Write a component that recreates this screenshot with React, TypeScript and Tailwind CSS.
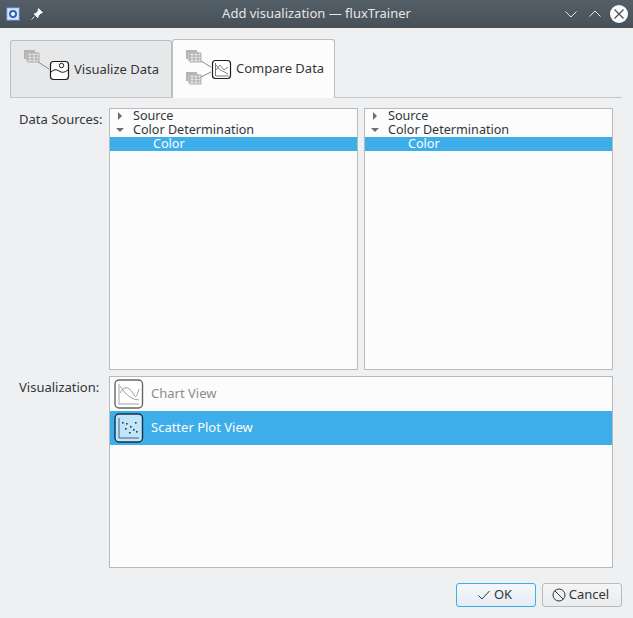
const font = "font-['Noto_Sans',sans-serif]";

function Cube({ x, y }: { x: number; y: number }) {
  return (
    <g transform={`translate(${x} ${y})`}>
      <rect x="0" y="0" width="11" height="9" fill="#b4b4b4" />
      <rect x="2" y="2" width="11" height="9" fill="#c4c4c4" />
      <rect x="4" y="3" width="11" height="9" fill="#e8e8e8" stroke="#a0a0a0" strokeWidth="0.8" />
      <path d="M4 6h11M4 9h11M8 3v9M12 3v9" stroke="#a0a0a0" strokeWidth="0.8" fill="none" />
    </g>
  );
}

function VisualizeIcon() {
  return (
    <svg width="50" height="38" viewBox="0 0 50 38" className="shrink-0">
      <Cube x={0} y={0} />
      <path d="M14 12 L25 19" stroke="#8a8a8a" strokeWidth="1" fill="none" />
      <rect x="26.5" y="11.5" width="18" height="18" rx="3" fill="#fff" stroke="#1c1c1c" strokeWidth="1.2" />
      <circle cx="37.5" cy="15.5" r="2.2" fill="none" stroke="#1c1c1c" strokeWidth="1" />
      <path d="M27 22 Q31 18 35 21 T44 20" fill="none" stroke="#1c1c1c" strokeWidth="1" />
    </svg>
  );
}

function CompareIcon() {
  return (
    <svg width="50" height="38" viewBox="0 0 50 38" className="shrink-0">
      <Cube x={0} y={0} />
      <Cube x={0} y={22} />
      <path d="M15 11 L25 17 M15 27 L25 22" stroke="#8a8a8a" strokeWidth="1" fill="none" />
      <rect x="26.5" y="10.5" width="18" height="18" rx="3" fill="#fff" stroke="#1c1c1c" strokeWidth="1.2" />
      <path d="M29.5 13v13h13" fill="none" stroke="#777" strokeWidth="1" />
      <path d="M30 15 Q33 20 36 21 T42 24 M30 20 L34 15 L38 20 L42 17" fill="none" stroke="#666" strokeWidth="0.8" />
    </svg>
  );
}

function ChartIcon() {
  return (
    <svg width="30" height="30" viewBox="0 0 30 30">
      <rect x="1" y="1" width="27.5" height="28" rx="4" fill="#fff" stroke="#666" strokeWidth="1.4" />
      <path d="M5 5v20h20" fill="none" stroke="#999" strokeWidth="0.9" />
      <path d="M6 7 Q11 15 16 18 T25 21 M6 14 Q10 7 14 9 T20 16 T25 10" fill="none" stroke="#888" strokeWidth="0.8" />
    </svg>
  );
}

function ScatterIcon() {
  const dots = [[8, 9], [12, 10], [16, 13], [21, 9], [11, 15], [19, 16], [15, 19], [22, 18]];
  return (
    <svg width="30" height="30" viewBox="0 0 30 30">
      <rect x="1" y="1" width="27.5" height="28" rx="4" fill="#c4e4f8" stroke="#12344c" strokeWidth="1.4" />
      <path d="M5 5v20h20" fill="none" stroke="#2a5a7c" strokeWidth="0.9" />
      {dots.map(([x, y]) => (
        <rect key={`${x}-${y}`} x={x} y={y} width="1.6" height="1.6" fill="#1c3c50" />
      ))}
    </svg>
  );
}

function Tree() {
  return (
    <div className="flex-1 min-w-0 border border-[#b9babb] bg-[#fcfcfc] text-[12.6px] leading-[14px] text-[#31363b]">
      <div className="h-[14px] flex items-center">
        <svg width="23" height="14" viewBox="0 0 23 14"><path d="M8 3l4 4-4 4z" fill="#6b6e71" /></svg>
        <span>Source</span>
      </div>
      <div className="h-[14px] flex items-center">
        <svg width="23" height="14" viewBox="0 0 23 14"><path d="M6 5h8l-4 4z" fill="#6b6e71" /></svg>
        <span>Color Determination</span>
      </div>
      <div className="h-[14px] pl-[43px] bg-[#3daee9] text-[#fcfcfc]">Color</div>
    </div>
  );
}

export default function App() {
  return (
    <div className={`${font} w-[633px] h-[618px] bg-[#eff0f1] flex flex-col overflow-hidden text-[#31363b] text-[13px]`}>
      <div className="h-[28px] shrink-0 flex items-center bg-gradient-to-b from-[#555f68] to-[#475057] text-[#e4e6e8] px-[6px]">
        <svg width="14" height="14" viewBox="0 0 14 14" className="shrink-0">
          <rect x="0.5" y="0.5" width="13" height="13" fill="#bcd0ee" stroke="#3f6fc0" strokeDasharray="1.5 1" />
          <rect x="2" y="2" width="10" height="10" fill="#d8e4f6" />
          <circle cx="7" cy="7" r="3" fill="#fff" stroke="#2f62b8" strokeWidth="2" />
        </svg>
        <svg width="14" height="14" viewBox="0 0 14 14" className="ml-[10px] shrink-0">
          <path d="M8.5 1.5l4 4-2 1-2.2 2.2-.5 2-3.8-3.8 2-.5L8 4.2z M4.5 9.5L1.5 12.5" fill="#fcfcfc" stroke="#fcfcfc" strokeWidth="0.8" />
        </svg>
        <div className="flex-1 text-center pl-[25px]">Add visualization — fluxTrainer</div>
        <svg width="14" height="14" viewBox="0 0 14 14" className="shrink-0">
          <path d="M1.5 4.5L7 10l5.5-5.5" fill="none" stroke="#e4e6e8" strokeWidth="1" />
        </svg>
        <svg width="14" height="14" viewBox="0 0 14 14" className="ml-[10px] shrink-0">
          <path d="M1.5 9.5L7 4l5.5 5.5" fill="none" stroke="#e4e6e8" strokeWidth="1" />
        </svg>
        <svg width="18" height="18" viewBox="0 0 18 18" className="ml-[8px] mr-[-1px] shrink-0">
          <circle cx="9" cy="9" r="9" fill="#fcfcfc" />
          <path d="M4.5 4.5l9 9M13.5 4.5l-9 9" stroke="#474f56" strokeWidth="1.2" />
        </svg>
      </div>

      <div className="flex-1 flex flex-col pl-[10px] pr-[11px] pt-[11px] min-h-0">
        <div className="h-[59px] shrink-0 flex items-end border-b border-[#c4c5c6]">
          <div className="w-[162px] h-[57px] flex items-center pl-[13px] border border-b-0 border-[#bcbdbe] rounded-t-[3px] bg-[#e7e8e9]">
            <VisualizeIcon />
            <span className="mt-[1px]">Visualize Data</span>
          </div>
          <div className="w-[163px] h-[59px] flex items-center pl-[13px] border border-b-0 border-[#bcbdbe] rounded-t-[3px] bg-[#fcfcfc] -mb-px">
            <CompareIcon />
            <span>Compare Data</span>
          </div>
        </div>

        <div className="flex gap-[6px] h-[262px] mt-[10px] ml-[99px] mr-[9px] relative">
          <span className="absolute left-[-90px] top-[2px]">Data Sources:</span>
          <Tree />
          <Tree />
        </div>

        <div className="h-[192px] mt-[6px] ml-[99px] mr-[9px] relative border border-[#b9babb] bg-[#fcfcfc]">
          <span className="absolute left-[-91px] top-[1px]">Visualization:</span>
          <div className="h-[34px] flex items-center pl-[4px] gap-[7px] text-[#8a8c8e]">
            <ChartIcon />
            <span>Chart View</span>
          </div>
          <div className="h-[34px] flex items-center pl-[4px] gap-[7px] bg-[#3daee9] text-[#fcfcfc]">
            <ScatterIcon />
            <span>Scatter Plot View</span>
          </div>
        </div>

        <div className="flex justify-end gap-[6px] mt-[15px]">
          <button className="w-[80px] h-[24px] flex items-center justify-center gap-[3px] pr-[3px] rounded-[3px] border border-[#3daee9] bg-gradient-to-b from-[#f4f8fb] to-[#e6edf2]">
            <svg width="14" height="14" viewBox="0 0 14 14"><path d="M1.5 7.5L5 11l7.5-8" fill="none" stroke="#31363b" strokeWidth="1" /></svg>
            <span>OK</span>
          </button>
          <button className="w-[80px] h-[24px] flex items-center justify-center gap-[3px] pr-[3px] rounded-[3px] border border-[#b9babb] bg-gradient-to-b from-[#f5f5f6] to-[#eaebec]">
            <svg width="14" height="14" viewBox="0 0 14 14"><circle cx="7" cy="7" r="6" fill="none" stroke="#31363b" strokeWidth="1" /><path d="M2.8 2.8l8.4 8.4" stroke="#31363b" strokeWidth="1" /></svg>
            <span>Cancel</span>
          </button>
        </div>
      </div>
    </div>
  );
}
